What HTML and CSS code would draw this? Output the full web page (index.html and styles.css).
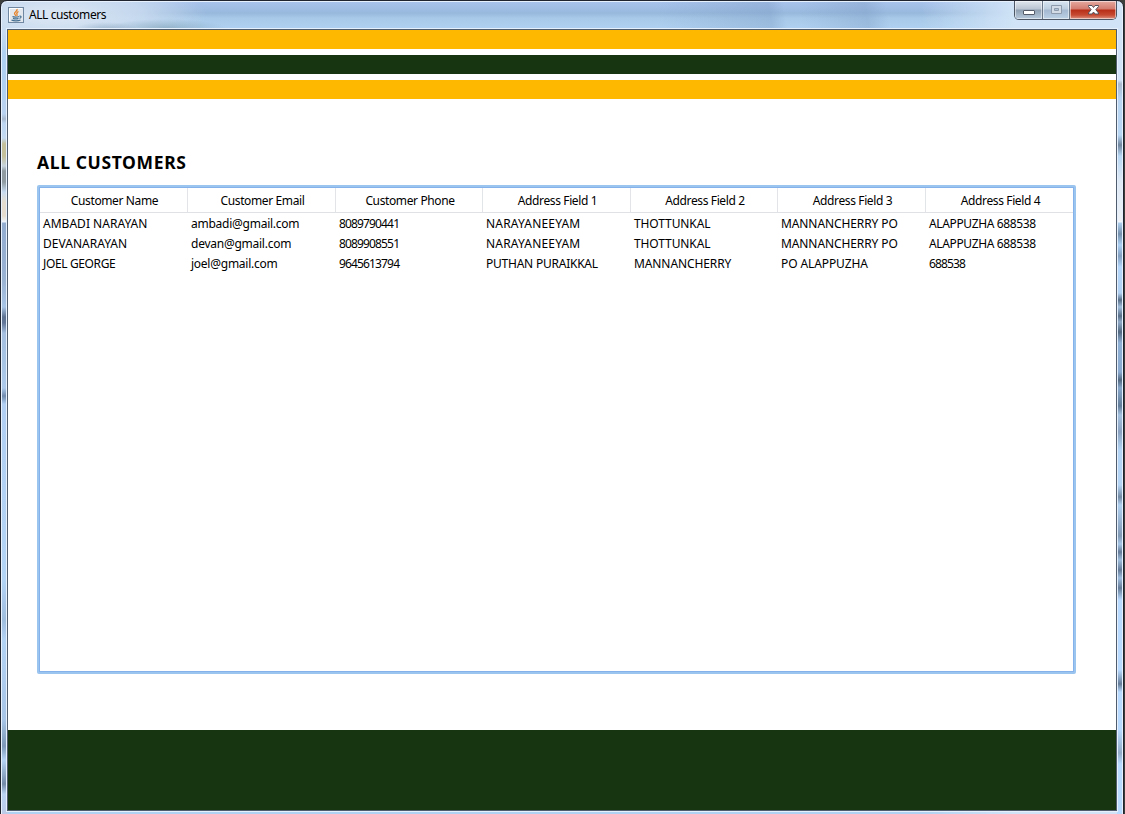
FILE: index.html
```html
<!DOCTYPE html>
<html lang="en">
<head>
<meta charset="utf-8">
<title>ALL customers</title>
<link rel="stylesheet" href="styles.css">
</head>
<body>
<div class="window">
  <header class="titlebar">
    <svg class="app-icon" width="16" height="16" viewBox="0 0 16 16">
      <rect x=".5" y=".5" width="15" height="15" fill="#e3e8ee" stroke="#7188a3"/>
      <path d="M1.500 14V1.500H14" fill="none" stroke="#fff"/>
      <path d="M9 2c1 2-3 3-2.500 4.500C6.700 7.500 8 8 7.500 9M10.500 4.500C8.500 5.500 8.500 6.500 9 7.500 9.300 8.300 9 8.700 8.600 9" fill="none" stroke="#e5822a" stroke-width="1.300"/>
      <path d="M4.500 9.500c1 .8 5 .8 6.500 0M5 11.400c1.500.6 4 .6 5.500 0M3.500 13c2 1.200 7 1.100 9 0M11.500 9.200c2-.5 2.200 1.600 0 2.200" fill="none" stroke="#456f91" stroke-width="1.200"/>
    </svg>
    <span class="caption">ALL customers</span>
    <div class="controls">
      <span class="control minimize"><svg width="27" height="18" viewBox="0 0 27 18"><rect x="8.500" y="9.500" width="11" height="4" rx=".5" fill="#fff" stroke="#555b68"/></svg></span>
      <span class="control maximize"><svg width="26" height="18" viewBox="0 0 26 18"><path d="M8.500 4.500h10v8h-10zM11.500 7.500v2h4v-2z" fill="#d3dce6" fill-rule="evenodd" stroke="#8d9bad"/></svg></span>
      <span class="control close"><svg width="46" height="18" viewBox="0 0 46 18"><path d="M18.500 4.500H22l1.500 2 1.500-2h3.500v1l-2.700 3.200 2.700 3.300v1H25l-1.500-2-1.500 2h-3.500v-1l2.700-3.300-2.700-3.200z" fill="#fff" stroke="#54505a"/></svg></span>
    </div>
  </header>
  <main class="content">
    <div class="stripes"><div class="stripe gold"></div><div class="stripe green"></div><div class="stripe gold"></div></div>
    <section class="panel">
      <h1 class="heading">ALL CUSTOMERS</h1>
      <div class="table-frame">
        <table class="customers">
          <colgroup><col class="wide"><col class="wide"><col class="narrow"><col class="wide"><col class="narrow"><col class="wide"><col class="narrow"></colgroup>
          <thead><tr><th>Customer Name</th><th>Customer Email</th><th>Customer Phone</th><th>Address Field 1</th><th>Address Field 2</th><th>Address Field 3</th><th>Address Field 4</th></tr></thead>
          <tbody>
            <tr><td class="loose">AMBADI NARAYAN</td><td class="email">ambadi@gmail.com</td><td class="num">8089790441</td><td class="looser">NARAYANEEYAM</td><td>THOTTUNKAL</td><td>MANNANCHERRY PO</td><td class="mixed">ALAPPUZHA 688538</td></tr>
            <tr><td class="loose">DEVANARAYAN</td><td class="email">devan@gmail.com</td><td class="num">8089908551</td><td class="looser">NARAYANEEYAM</td><td>THOTTUNKAL</td><td>MANNANCHERRY PO</td><td class="mixed">ALAPPUZHA 688538</td></tr>
            <tr><td class="mixed">JOEL GEORGE</td><td class="email">joel@gmail.com</td><td class="num">9645613794</td><td class="tight">PUTHAN PURAIKKAL</td><td>MANNANCHERRY</td><td>PO ALAPPUZHA</td><td class="num">688538</td></tr>
          </tbody>
        </table>
      </div>
    </section>
    <footer class="footer"></footer>
  </main>
</div>
</body>
</html>
```
FILE: styles.css
```css
* { box-sizing: border-box; }
body {
  margin: 0;
  height: 814px;
  overflow: hidden;
  background: #3c3e3c;
  font-family: "Noto Sans", "Open Sans", sans-serif;
  color: #000;
}
.window {
  width: 1124px;
  height: 820px;
  padding: 0 5px;
  border: 1px solid #20242e;
  border-radius: 7px 7px 0 0;
  box-shadow: inset 0 0 0 1px #e6f1fd;
  background:
    linear-gradient(#b9d2ef 0, #b9d2ef 14px, #a8b9ce 19px, #bdd5f0 23px, #c4daf3 38px, #c4c099 44px, #c4c099 56px, #c6d3dd 66px, #8f9ba0 71px, #8f9ba0 82px, #c6daf0 92px, #e4ddcf 102px, #e4ddcf 116px, #eef5fc 122px, #92acd0 123px, #9ab3d3 180px, #a8c4e6 207px, #5e7290 217px, #63779a 223px, #a4bfdf 233px, #acc9eb 288px, #708bae 296px, #b0cff2 304px, #b4d4f6 480px, #9fbddd 520px, #b3d3f5 540px, #a7c5e6 620px, #7d98b9 646px, #b5d4f5 660px, #748ba8 684px, #bad4f2 694px, #bccbe7 714px) 0 99px / 7px 720px no-repeat,
    linear-gradient(#d3e6fa, #a9b9cd 4px, #b8d4f1 18px, #b8d7f5 55px, #71869e 65px, #b7d7f4 76px, #dce8f5 100px, #edf1f6 140px, #f4f8fc 142px, #aecfee 143px, #7590ad 154px, #abd0f3 165px, #829fc0 176px, #b3d6fa 187px, #b1d1f3 213px, #596f88 220px, #a1bedc 227px, #596f88 236px, #8fa9c6 242px, #536981 252px, #8fb0d5 263px, #8aaad0 292px, #536981 300px, #87a7ca 308px, #627d99 326px, #a4c1df 335px, #8aa2bf 352px, #b3d4f5 370px, #b3d4f5 405px, #738aa4 417px, #b0d0f0 425px, #8099b5 456px, #a6c6e7 464px, #657c98 472px, #9ebddd 480px, #657c98 490px, #9fbedf 498px, #657c98 508px, #b8daff 520px, #b8daff 590px, #657c98 604px, #b8daff 612px, #b8daff 650px, #91abc7 673px, #b8daff 684px) 1116px 79px / 6px 740px no-repeat,
    radial-gradient(ellipse 32px 7px at 105px 28px, #829eb588, transparent),
    radial-gradient(ellipse 60px 9px at 165px 27px, #7d9fb399, transparent),
    radial-gradient(ellipse 150px 40px at 55px 14px, #d9e5f3 10%, #cbdcf0cc 60%, transparent),
    linear-gradient(80deg, transparent 650px, #7897c055 760px, transparent 775px, transparent 790px, #7897c055 855px, transparent 876px) 0 0 / 100% 29px no-repeat,
    linear-gradient(90deg, transparent 920px, #d1e4f7 1015px),
    linear-gradient(#a9c3ed, #9fbde3 8px, #98b8dc 12px, #a8c9e8 17px, #b0d1f1 29px);
}
.titlebar {
  display: flex;
  height: 27px;
  padding-left: 2px;
}
.app-icon { margin-top: 6px; }
.caption {
  margin: 5px 0 0 5px;
  font-size: 12px;
  line-height: 18px;
  letter-spacing: -.42px;
}
.controls {
  display: flex;
  height: 19px;
  margin: 0 1px 0 auto;
  border: 1px solid #4c5665;
  border-top: 0;
  border-radius: 0 0 5px 5px;
  overflow: hidden;
}
.control {
  height: 18px;
  box-shadow: inset 0 0 0 1px #ffffff80;
}
.control svg { display: block; }
.minimize {
  border-right: 1px solid #6b788a;
  background: linear-gradient(#e0e6ed, #bac5d2 8px, #8f9fb2 9px, #b7c9dc);
}
.maximize {
  border-right: 1px solid #6b788a;
  background: linear-gradient(#d9e5f1, #bdcede 8px, #a4b9d1 9px, #bcd0e5);
}
.close { background: linear-gradient(#e6aaa1, #d37b6e 8px, #b82e18 9px, #c64931 14px, #dc9584); }
.content {
  display: flex;
  flex-direction: column;
  width: 1112px;
  height: 784px;
  border: 1px solid #e5f0fc;
  outline: 1px solid #4e5c6d;
  outline-offset: -2px;
  padding: 1px;
  background: #fff;
}
.stripes {
  display: grid;
  gap: 6px;
  flex: none;
}
.stripe { height: 19px; }
.gold { background: #ffb800; }
.green, .footer { background: #183511; }
.panel {
  flex: 1;
  padding: 50px 40px 0 29px;
}
.heading {
  height: 36px;
  margin: 0;
  font-size: 17.5px;
  font-weight: 700;
  line-height: 27px;
  letter-spacing: .63px;
}
.table-frame {
  width: 1039px;
  height: 489px;
  border: 2px solid #9bc4ee;
  border-radius: 2px;
  box-shadow: inset 0 0 0 1px #86b2ec;
  padding: 1px;
}
.customers {
  width: 1033px;
  table-layout: fixed;
  border-collapse: separate;
  border-spacing: 0;
  font-size: 12px;
}
.wide { width: 148px; }
.narrow { width: 147px; }
.customers th {
  height: 25px;
  padding: 2px 0 0 2px;
  border-right: 1px solid #e2e4e8;
  border-bottom: 1px solid #dfe1e4;
  font-weight: 400;
  line-height: 22px;
  letter-spacing: -.38px;
}
.customers th:last-child { border-right: 0; }
.customers td {
  height: 20px;
  padding: 2px 0 0 3px;
  line-height: 18px;
  white-space: nowrap;
  letter-spacing: -.1px;
}
.customers .loose { letter-spacing: .02px; }
.customers .looser { letter-spacing: .2px; }
.customers .tight { letter-spacing: -.23px; }
.customers .mixed { letter-spacing: -.37px; }
.customers .email { letter-spacing: -.25px; }
.customers .num { letter-spacing: -.85px; }
.footer {
  flex: none;
  height: 80px;
}
```
